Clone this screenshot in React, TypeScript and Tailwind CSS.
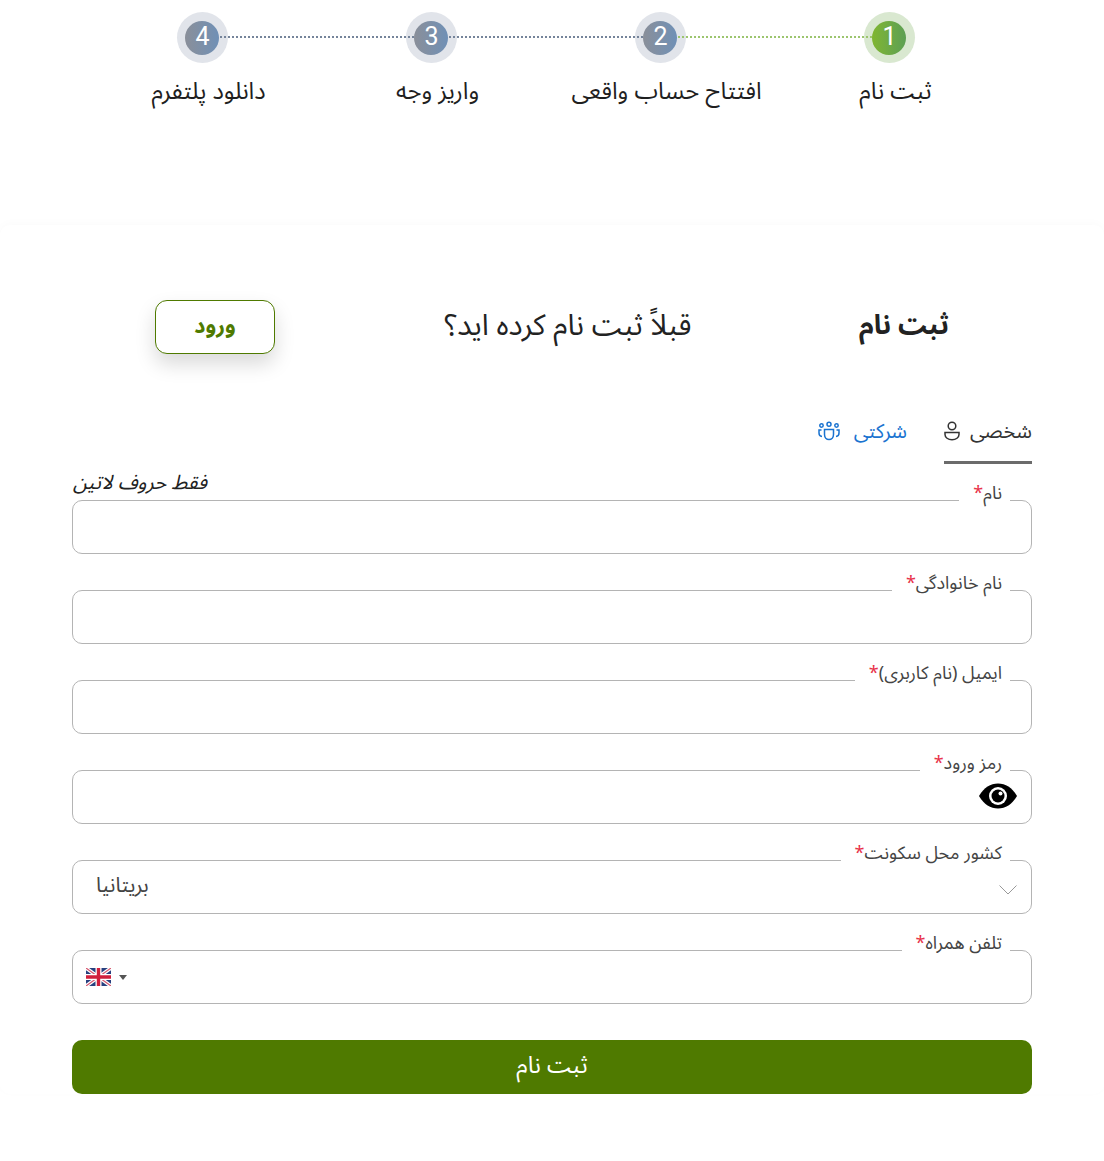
const FONT = "font-['Noto_Sans','Noto_Sans_Arabic','DejaVu_Sans',sans-serif]";

const steps = [
  { n: "1", label: "ثبت نام", active: true },
  { n: "2", label: "افتتاح حساب واقعی" },
  { n: "3", label: "واریز وجه" },
  { n: "4", label: "دانلود پلتفرم" },
];

function Step({ n, label, active, last }: { n: string; label: string; active?: boolean; last: boolean }) {
  return (
    <div className="relative flex flex-col items-center">
      {!last && (
        <div
          className={
            active
              ? "absolute top-[24px] right-[calc(50%+23px)] z-10 h-[2px] w-[195px] bg-[repeating-linear-gradient(to_right,#9cc56e_0,#9cc56e_2.500px,transparent_2.500px,transparent_4px)]"
              : "absolute top-[24px] right-[calc(50%+23px)] z-10 h-[2px] w-[195px] bg-[repeating-linear-gradient(to_right,#75849a_0,#75849a_2.500px,transparent_2.500px,transparent_4px)]"
          }
        />
      )}
      <div
        className={
          active
            ? "mr-[13px] flex h-[51px] w-[51px] items-center justify-center rounded-full bg-[#d9e8d0]"
            : "mr-[13px] flex h-[51px] w-[51px] items-center justify-center rounded-full bg-[#e1e4ea]"
        }
      >
        <div
          className={
            active
              ? "flex h-[34px] w-[34px] items-center justify-center rounded-full bg-gradient-to-r from-[#80b62f] to-[#5c9f52] pb-[1px] pl-[1px] font-['Roboto',sans-serif] text-[25px] text-white"
              : "flex h-[34px] w-[34px] items-center justify-center rounded-full bg-gradient-to-r from-[#8a8f99] to-[#6f90b6] pb-[1px] pl-[1px] font-['Roboto',sans-serif] text-[25px] text-white"
          }
        >
          {n}
        </div>
      </div>
      <div className="mt-[11px] text-[23.800px] leading-[32px] text-[#1f1f1f]">{label}</div>
    </div>
  );
}

function Field({ label, children, note }: { label: string; children?: React.ReactNode; note?: string }) {
  return (
    <div className="relative mb-[36px] h-[54px] rounded-[10px] border border-[#b4b4b4] bg-white">
      <div className="absolute -top-[23px] right-[21px] bg-white pl-[14px] pr-[8px] text-[18px] leading-[28px] text-[#444]">
        {label}
        <span className="text-[#e8324a]">*</span>
      </div>
      {note && (
        <div className="absolute -top-[33px] left-0 text-[20px] italic leading-[28px] text-[#222]">{note}</div>
      )}
      {children}
    </div>
  );
}

function Eye() {
  return (
    <svg viewBox="0 0 38 26" className="absolute right-[14px] top-[12px] h-[26px] w-[38px]">
      <path d="M0 13C5 4.500 11.500 0.500 19 0.500S33 4.500 38 13C33 21.500 26.500 25.500 19 25.500S5 21.500 0 13Z" fill="#000" />
      <circle cx="19" cy="13" r="9" fill="#fff" />
      <circle cx="19" cy="13" r="6.500" fill="#000" />
      <circle cx="21.500" cy="10.500" r="2" fill="#fff" />
    </svg>
  );
}

function Flag() {
  return (
    <svg viewBox="0 0 25 18" className="h-[18px] w-[25px]">
      <rect width="25" height="18" rx="2" fill="#27407f" />
      <path d="M0 0L25 18M25 0L0 18" stroke="#fff" strokeWidth="3.600" />
      <path d="M0 0L25 18M25 0L0 18" stroke="#d5576f" strokeWidth="1.200" />
      <path d="M12.500 0V18M0 9H25" stroke="#fff" strokeWidth="6" />
      <path d="M12.500 0V18M0 9H25" stroke="#d01f3c" strokeWidth="3.400" />
    </svg>
  );
}

function PersonIcon() {
  return (
    <svg viewBox="0 0 16 20" className="h-[20px] w-[16px]" fill="none" stroke="#333" strokeWidth="1.500">
      <circle cx="8" cy="5" r="3.800" />
      <path d="M1 11.500H15V13.500C15 16.500 12 18.800 8 18.800S1 16.500 1 13.500Z" />
    </svg>
  );
}

function TeamIcon() {
  return (
    <svg viewBox="0 0 22 20" className="h-[20px] w-[22px]" fill="none" stroke="#1a73d0" strokeWidth="1.500">
      <circle cx="11" cy="3.200" r="2" />
      <circle cx="3.500" cy="4.500" r="1.700" />
      <circle cx="18.500" cy="4.500" r="1.700" />
      <path d="M6.500 8.500H15.500V13.500C15.500 16.500 13.500 18.500 11 18.500S6.500 16.500 6.500 13.500Z" />
      <path d="M3.500 9H1V12C1 14 2.200 15.300 4 15.500" />
      <path d="M18.500 9H21V12C21 14 19.800 15.300 18 15.500" />
    </svg>
  );
}

export default function App() {
  return (
    <div dir="rtl" className={`min-h-[1161px] w-[1104px] bg-white ${FONT}`}>
      <div className="h-[225px] pt-[12px]">
        <div className="mx-[94px] grid grid-cols-4">
          {steps.map((s, i) => (
            <Step key={s.n} n={s.n} label={s.label} active={s.active} last={i === steps.length - 1} />
          ))}
        </div>
      </div>
      <div className="rounded-[10px] bg-white px-[72px] pt-[75px] shadow-[0_-2px_10px_rgba(0,0,0,0.02)]">
        <div className="flex h-[54px] items-center">
          <h1 className="mr-[83px] w-[90px] whitespace-nowrap pb-[5px] text-center text-[27px] font-bold text-[#222]">ثبت نام</h1>
          <div className="mr-[166px] w-[250px] whitespace-nowrap pb-[5px] text-center text-[29.500px] text-[#222]">قبلاً ثبت نام کرده اید؟</div>
          <button className="mr-[168px] h-[54px] w-[120px] rounded-[12px] border border-[#4f7a00] bg-white pb-[4px] text-[21.500px] font-bold text-[#4f7a00] shadow-[0_10px_20px_rgba(0,0,0,0.15)]">
            ورود
          </button>
        </div>
        <div className="mt-[56px] flex items-start gap-[37px]">
          <div className="flex h-[54px] w-[88px] items-center justify-between border-b-[3px] border-[#6b6b6b] pb-[9px] text-[20px] text-[#333]">
            <span>شخصی</span>
            <PersonIcon />
          </div>
          <div className="flex h-[54px] items-center gap-[14px] pb-[12px] text-[20px] text-[#1a73d0]">
            <span>شرکتی</span>
            <TeamIcon />
          </div>
        </div>
        <div className="mt-[36px]">
          <Field label="نام" note="فقط حروف لاتین" />
          <Field label="نام خانوادگی" />
          <Field label="ایمیل (نام کاربری)" />
          <Field label="رمز ورود">
            <Eye />
          </Field>
          <Field label="کشور محل سکونت">
            <div className="flex h-full items-center justify-between pb-[4px] pl-[14px] pr-[14px]">
              <svg viewBox="0 0 18 10" className="mt-[10px] h-[10px] w-[18px]" fill="none" stroke="#999" strokeWidth="1">
                <path d="M0.500 0.500L9 9L17.500 0.500" />
              </svg>
              <span className="ml-[9px] text-[20.800px] text-[#444]">بریتانیا</span>
            </div>
          </Field>
          <Field label="تلفن همراه">
            <div dir="ltr" className="flex h-full items-center gap-[8px] pl-[13px]">
              <Flag />
              <div className="h-0 w-0 border-x-[4px] border-t-[5px] border-x-transparent border-t-[#555]" />
            </div>
          </Field>
        </div>
        <button className="h-[54px] w-full rounded-[10px] bg-[#4f7a00] pb-[5px] text-[23.500px] text-white">ثبت نام</button>
      </div>
    </div>
  );
}
